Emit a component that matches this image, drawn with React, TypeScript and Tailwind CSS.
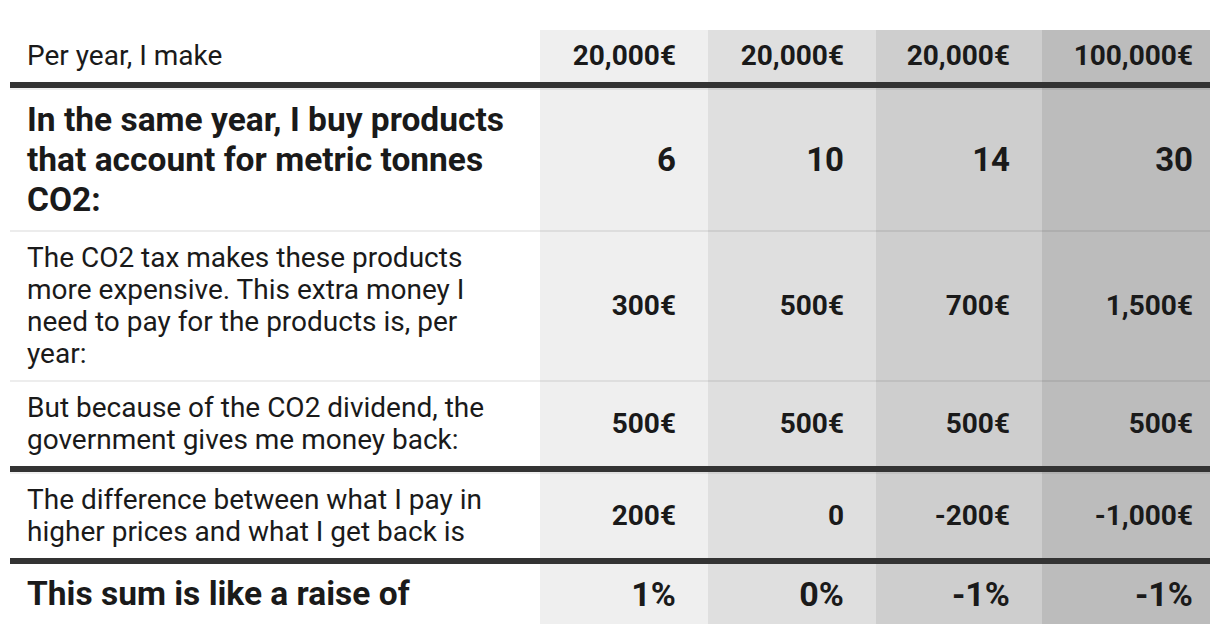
import React from "react";

const colBg = ["bg-[#efefef]", "bg-[#dfdfdf]", "bg-[#cecece]", "bg-[#bcbcbc]"];
const colPr = ["pr-[32px]", "pr-[32px]", "pr-[32px]", "pr-[17px]"];

type Row = {
  label: string;
  labelCls: string;
  values: string[];
  valueCls: string;
  border: "thin" | "thick" | "none";
  noTop?: boolean;
};

const rows: Row[] = [
  {
    label: "Per year, I make",
    labelCls: "text-[28px] leading-[32px] font-normal",
    values: ["20,000€", "20,000€", "20,000€", "100,000€"],
    valueCls: "text-[28px] leading-[32px]",
    border: "thick",
  },
  {
    label: "In the same year, I buy products that account for metric tonnes CO2:",
    labelCls: "text-[33.5px] leading-[40px] font-bold",
    values: ["6", "10", "14", "30"],
    valueCls: "text-[33px] leading-[40px]",
    border: "thin",
  },
  {
    label:
      "The CO2 tax makes these products more expensive. This extra money I need to pay for the products is, per year:",
    labelCls: "text-[28px] leading-[32px] font-normal",
    values: ["300€", "500€", "700€", "1,500€"],
    valueCls: "text-[28px] leading-[32px]",
    border: "thin",
  },
  {
    label: "But because of the CO2 dividend, the government gives me money back:",
    labelCls: "text-[28px] leading-[32px] font-normal",
    values: ["500€", "500€", "500€", "500€"],
    valueCls: "text-[28px] leading-[32px]",
    border: "thick",
  },
  {
    label: "The difference between what I pay in higher prices and what I get back is",
    labelCls: "text-[28px] leading-[32px] font-normal",
    values: ["200€", "0", "-200€", "-1,000€"],
    valueCls: "text-[28px] leading-[32px]",
    border: "thick",
  },
  {
    label: "This sum is like a raise of",
    labelCls: "text-[33.5px] leading-[40px] font-bold",
    values: ["1%", "0%", "-1%", "-1%"],
    valueCls: "text-[34px] leading-[40px]",
    border: "none",
    noTop: true,
  },
];

export default function App() {
  return (
    <div
      className="w-[1220px] h-[634px] bg-white text-[#1a1a1a] pt-[30px] pl-[10px] overflow-hidden"
      style={{ fontFamily: "Roboto, 'Noto Sans', sans-serif" }}
    >
      <div className="grid grid-cols-[530px_168px_168px_166px_168px] w-[1200px]">
        {rows.map((r, ri) => {
          const prevThick = ri > 0 && rows[ri - 1].border === "thick" && !r.noTop;
          const bottom =
            r.border === "thick"
              ? "border-b-[6px] border-b-[#333333]"
              : r.border === "thin"
              ? "border-b-2 border-b-black/[0.07]"
              : "";
          const topCls = prevThick ? "border-t-2 border-t-black/[0.06]" : "";
          return (
            <React.Fragment key={ri}>
              <div className={`flex items-center pl-[17px] py-[10px] bg-white ${bottom} ${topCls}`}>
                <span className={`block w-[483px] ${r.labelCls}`}>{r.label}</span>
              </div>
              {r.values.map((v, vi) => (
                <div
                  key={vi}
                  className={`flex items-center justify-end py-[10px] ${colPr[vi]} ${colBg[vi]} ${bottom} ${topCls}`}
                >
                  <span className={`${r.valueCls} font-bold`}>{v}</span>
                </div>
              ))}
            </React.Fragment>
          );
        })}
      </div>
    </div>
  );
}
